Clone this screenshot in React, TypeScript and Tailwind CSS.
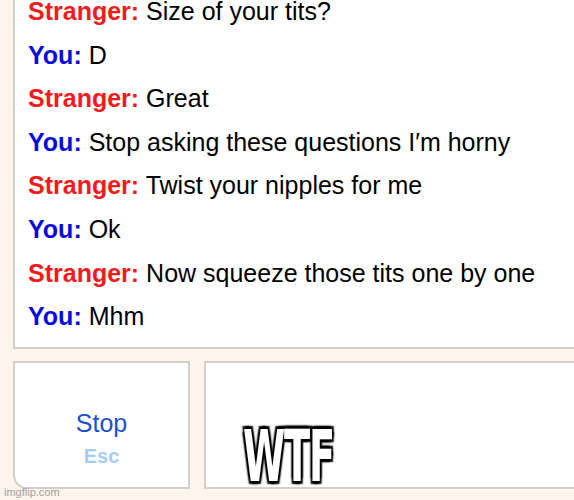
import React from 'react';

type Line = { who: 'Stranger' | 'You'; text: string };

const lines: Line[] = [
  { who: 'Stranger', text: 'Size of your tits?' },
  { who: 'You', text: 'D' },
  { who: 'Stranger', text: 'Great' },
  { who: 'You', text: 'Stop asking these questions I\u2032m horny' },
  { who: 'Stranger', text: 'Twist your nipples for me' },
  { who: 'You', text: 'Ok' },
  { who: 'Stranger', text: 'Now squeeze those tits one by one' },
  { who: 'You', text: 'Mhm' },
];

export default function App() {
  return (
    <div className="relative w-[574px] h-[500px] overflow-hidden bg-[#fdf4ec] font-['Liberation_Sans',Arial,sans-serif]">
      <div className="ml-[13px] -mt-[10px] bg-white border-l-2 border-b-2 border-[#d3cfcb] pl-[13px] pb-[8px]">
        {lines.map((l, i) => (
          <div key={i} className="text-[25px] leading-[43.6px] text-black whitespace-nowrap">
            <span className={l.who === 'Stranger' ? 'font-bold text-[#f01c1c]' : 'font-bold text-[#0a0ae0]'}>
              {l.who}:
            </span>{' '}
            {l.text}
          </div>
        ))}
      </div>

      <div className="flex gap-[14px] ml-[13px] mt-[12px]">
        <div className="w-[177px] h-[128px] bg-white border-2 border-[#d3cfcb] rounded-bl-[14px] flex flex-col items-center pt-[46px]">
          <div className="text-[25px] leading-[28px] text-[#1d4fcb]">Stop</div>
          <div className="text-[20px] leading-[26px] font-bold text-[#a5cdf4] mt-[6px]">Esc</div>
        </div>
        <div className="flex-1 h-[128px] bg-white border-2 border-r-0 border-[#d3cfcb]" />
      </div>

      <div
        className="absolute left-[243px] top-[421px] text-[71px] leading-[71px] font-bold text-white font-['DejaVu_Sans_Condensed','Liberation_Sans_Narrow',sans-serif] origin-left scale-x-[0.6] tracking-[-2px]"
        style={{ textShadow: '0 0 3px #000, 0 0 3px #000, 3px 3px 2px #000, -3px -3px 2px #000, 3px -3px 2px #000, -3px 3px 2px #000' }}
      >
        WTF
      </div>

      <div className="absolute left-[4px] top-[485px] text-[11px] leading-[14px] text-[#a0a0a0]">imgflip.com</div>
    </div>
  );
}
